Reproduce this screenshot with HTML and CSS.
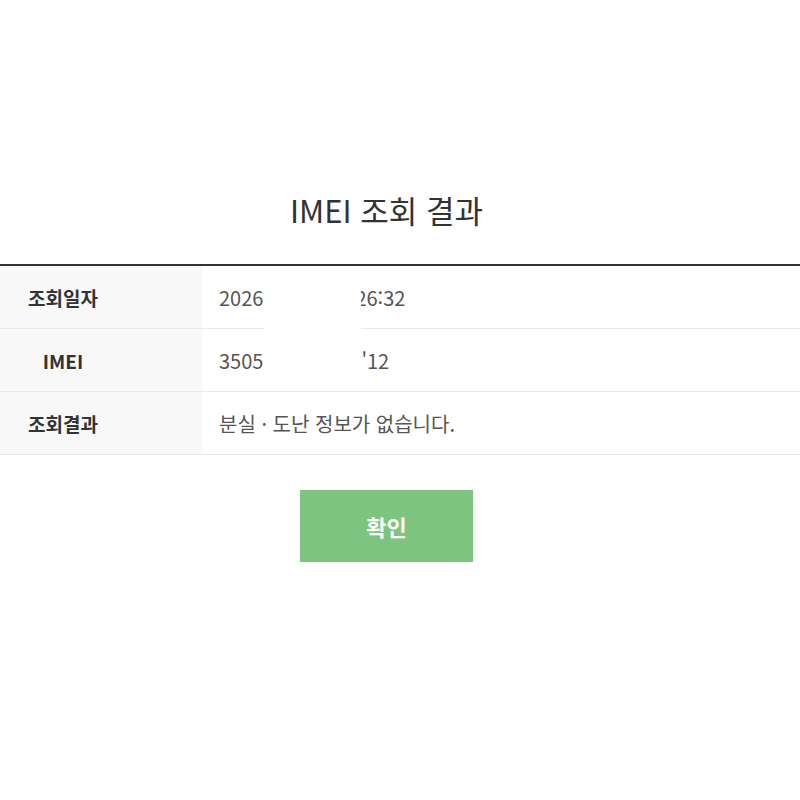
FILE: index.html
```html
<!DOCTYPE html>
<html lang="ko">
<head>
<meta charset="utf-8">
<link rel="stylesheet" href="styles.css">
</head>
<body>
<div class="page">
  <h1 class="title">IMEI 조회 결과</h1>
  <div class="table">
    <div class="row">
      <div class="label">조회일자</div>
      <div class="value"><span>2026</span><span class="gap g1"></span><span>26:32</span></div>
    </div>
    <div class="row">
      <div class="label">IMEI</div>
      <div class="value"><span>3505</span><span class="gap g2"></span><span>'12</span></div>
    </div>
    <div class="row">
      <div class="label">조회결과</div>
      <div class="value">분실 · 도난 정보가 없습니다.</div>
    </div>
    <div class="mask"></div>
  </div>
  <div class="actions">
    <button class="btn">확인</button>
  </div>
</div>
</body>
</html>
```
FILE: styles.css
```css
html, body {
  margin: 0;
  padding: 0;
  background: #fff;
}
body {
  font-family: "Noto Sans CJK KR", "Noto Sans", sans-serif;
  color: #333;
}
.page {
  padding-top: 188px;
}
.title {
  margin: 0;
  font-size: 31px;
  line-height: 44px;
  font-weight: 400;
  text-align: center;
  color: #333;
  padding-right: 27px;
}
.table {
  position: relative;
  margin-top: 32px;
  border-top: 2px solid #333;
}
.row {
  display: flex;
  height: 62px;
  border-bottom: 1px solid #e9e9e9;
}
.label {
  width: 202px;
  box-sizing: border-box;
  padding-right: 76px;
  background: #f8f8f8;
  display: flex;
  align-items: center;
  justify-content: center;
  font-size: 19px;
  font-weight: 700;
  color: #333;
}
.value {
  flex: 1;
  display: flex;
  align-items: center;
  padding-left: 17px;
  font-size: 20px;
  color: #555;
}
.gap {
  display: inline-block;
}
.g1 { width: 92px; }
.g2 { width: 98px; }
.mask {
  position: absolute;
  left: 264px;
  top: 2px;
  width: 97px;
  height: 122px;
  background: #fff;
  pointer-events: none;
}
.actions {
  display: flex;
  justify-content: center;
  margin-top: 35px;
  padding-right: 27px;
}
.btn {
  width: 173px;
  height: 72px;
  border: 0;
  background: #7cc47f;
  color: #fff;
  font-family: "Noto Sans CJK KR", "Noto Sans", sans-serif;
  font-size: 22px;
  font-weight: 700;
  cursor: pointer;
}
```
